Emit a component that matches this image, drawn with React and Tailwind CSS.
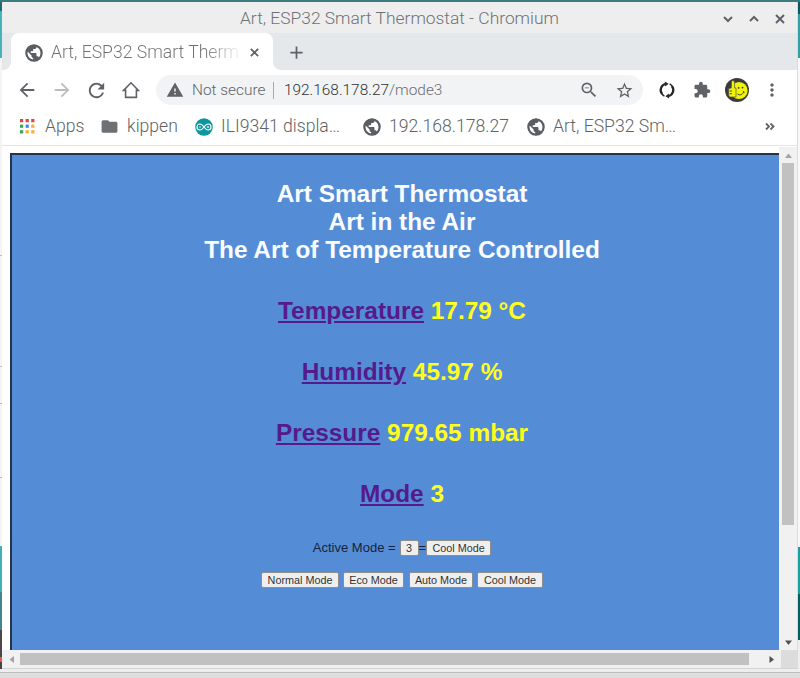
import React from "react";
import { MdArrowBack, MdArrowForward, MdRefresh, MdWarning, MdStarBorder, MdExtension, MdFolder, MdMoreVert, MdAdd, MdOutlineZoomOut } from "react-icons/md";

const GlobeIcon = () => (
  <svg className="block shrink-0" width="18" height="18" viewBox="1 1 22 22">
    <path fill="#5a5e63" d="M12 2C6.48 2 2 6.48 2 12s4.48 10 10 10 10-4.480 10-10S17.520 2 12 2zm-1 17.930c-3.950-.490-7-3.850-7-7.930 0-.620.080-1.210.210-1.790L9 15v1c0 1.100.900 2 2 2v1.930zm6.900-2.540c-.260-.810-1-1.390-1.900-1.390h-1v-3c0-.550-.450-1-1-1H8v-2h2c.550 0 1-.450 1-1V7h2c1.100 0 2-.900 2-2v-.410c2.930 1.190 5 4.060 5 7.410 0 2.080-.800 3.970-2.100 5.390z" />
    <circle cx="12" cy="12" r="9.6" fill="none" stroke="#5a5e63" strokeWidth="2.2" />
  </svg>
);

const Glyph = ({ d, size = 12 }) => (
  <svg className="block shrink-0" width={size} height={size} viewBox="0 0 12 12" fill="none" stroke="#5f6368" strokeWidth="2"><path d={d} /></svg>
);

const HomeIcon = () => (
  <svg className="block" width="18" height="18" viewBox="0 0 18 18" fill="none" stroke="#5f6368" strokeWidth="1.6">
    <path d="M1.6 9.4 L9 1.8 L16.4 9.4 H14.4 V16.4 H3.6 V9.4 Z" />
  </svg>
);

const AppsIcon = () => (
  <svg className="block" width="15" height="15" viewBox="0 0 15 15">
    {["#ea4335", "#ea4335", "#ea4335", "#34a853", "#4285f4", "#fbaf33", "#34a853", "#fbaf33", "#fbaf33"].map((c, i) => (
      <rect key={i} x={(i % 3) * 5.6} y={Math.floor(i / 3) * 5.6} width="3.2" height="3.2" fill={c} />
    ))}
  </svg>
);

const ArduinoIcon = () => (
  <svg className="block" width="18" height="18" viewBox="0 0 18 18" fill="none" stroke="#fff">
    <circle cx="9" cy="9" r="8.8" fill="#0d979d" stroke="none" />
    <path d="M9 9 C7.4 6.8 6.5 6 5 6 a3 3 0 0 0 0 6 C6.5 12 7.4 11.2 9 9 C10.6 6.8 11.5 6 13 6 a3 3 0 0 1 0 6 C11.5 12 10.6 11.2 9 9 Z" strokeWidth="1.2" />
    <path d="M4 9 h2 M12 9 h2 M13 8 v2" strokeWidth="0.8" />
  </svg>
);

const SyncIcon = () => (
  <svg className="block" width="18" height="18" viewBox="0 0 18 18">
    <g fill="none" stroke="#26282b" strokeWidth="2.3">
      <path d="M7.2 3 A6.3 6.3 0 0 0 4.2 13.1" />
      <path d="M10.8 15 A6.3 6.3 0 0 0 13.8 4.9" />
    </g>
    <path d="M6.8 0.4 L10.6 2.7 L7.2 5.5 Z M11.2 17.6 L7.4 15.3 L10.8 12.5 Z" fill="#26282b" />
    <path d="M11.6 2.9 A6.6 6.6 0 0 1 14 5 M6.4 15.1 A6.6 6.6 0 0 1 4 13" stroke="#26282b" strokeWidth="1.5" fill="none" />
  </svg>
);

const AvatarIcon = () => (
  <svg className="block" width="24" height="24" viewBox="0 0 24 24">
    <circle cx="12" cy="12" r="12" fill="#3b3c40" />
    <circle cx="14" cy="12.5" r="8.6" fill="#f2f20a" />
    <path d="M3.6 10.5 L6.4 10 V4.2 Q6.4 2.4 8 2.5 Q9.6 2.7 9.6 4.6 V10 H11 V19 H5.2 Q3.6 19 3.6 16 Z" fill="#f2f20a" stroke="#3b3c40" strokeWidth=".6" />
    <path d="M4.6 13 H7 M4.6 15.7 H7 M12.4 16 Q16 18.6 18.8 14 M17.8 13.3 L19.6 14.3" fill="none" stroke="#3b3c40" strokeWidth=".9" />
    <circle cx="13.6" cy="9.8" r=".9" fill="#3b3c40" />
    <circle cx="17.5" cy="9.6" r=".9" fill="#3b3c40" />
  </svg>
);

const Arrow = ({ d, color }) => (
  <svg className="block" width="9" height="9" viewBox="0 0 9 9"><path d={d} fill={color} /></svg>
);

function TitleBar() {
  return (
    <div className="flex h-[31px] items-center bg-[#eeeeee] pt-[2px] pl-[238px]">
      <span className="w-[474px] text-[17.4px] font-light whitespace-nowrap text-[#6f7174]">Art, ESP32 Smart Thermostat - Chromium</span>
      <span className="flex w-7 justify-center"><Glyph d="M2 4 L6 8 L10 4" /></span>
      <span className="flex w-6 justify-center"><Glyph d="M2 8 L6 4 L10 8" /></span>
      <span className="flex w-7 justify-center"><Glyph d="M2 2 L10 10 M10 2 L2 10" /></span>
    </div>
  );
}

function TabStrip() {
  return (
    <div className="flex h-[37px] bg-white">
      <div className="w-[9px] rounded-br-lg bg-[#e4e8eb]" />
      <div className="bg-[#e4e8eb]">
        <div className="flex h-full w-[262px] items-center rounded-t-lg bg-white pt-[2px] pl-[14px]">
          <GlobeIcon />
          <span className="ml-2 w-[192px] bg-gradient-to-r from-[#6f7174] from-80% to-transparent bg-clip-text text-[17.6px] font-light whitespace-nowrap text-transparent">Art, ESP32 Smart Therm</span>
          <span className="ml-[6px]"><Glyph d="M2 2 L10 10 M10 2 L2 10" size={11} /></span>
        </div>
      </div>
      <div className="flex flex-1 items-center rounded-bl-lg bg-[#e4e8eb] pt-px pl-[13px] text-[#5f6368]">
        <MdAdd size={21} />
      </div>
    </div>
  );
}

function Toolbar() {
  return (
    <div className="flex h-[40px] items-center bg-white pl-[14px] text-[#5f6368]">
      <MdArrowBack size={22} />
      <MdArrowForward size={22} className="ml-[13px] text-[#babcbe]" />
      <MdRefresh size={23} className="ml-[12px]" />
      <div className="ml-[14px]"><HomeIcon /></div>
      <div className="ml-[16px] flex h-[30px] w-[487px] items-center rounded-full bg-[#f1f3f4] pl-[10px]">
        <MdWarning size={18} />
        <span className="ml-[8px] w-[74px] pt-px text-[15.4px] font-light whitespace-nowrap">Not secure</span>
        <span className="ml-[7px] h-[17px] w-px bg-[#a7aaad]" />
        <span className="ml-[10px] w-[293px] pt-px text-[15.4px] font-light whitespace-nowrap text-[#303236]">192.168.178.27<span className="text-[#6b6e72]">/mode3</span></span>
        <MdOutlineZoomOut size={20} className="ml-[2px]" />
        <MdStarBorder size={19} className="ml-[16px]" />
      </div>
      <div className="ml-[15px]"><SyncIcon /></div>
      <MdExtension size={18} className="ml-[17px]" />
      <div className="ml-[14px]"><AvatarIcon /></div>
      <MdMoreVert size={20} className="ml-[13px]" />
    </div>
  );
}

function Bookmarks() {
  return (
    <div className="flex h-[36px] items-center border-b border-[#e3e5e7] bg-white pb-[2px] pl-[18px] text-[17.6px] font-light whitespace-nowrap text-[#606367]">
      <AppsIcon />
      <span className="ml-[10px] w-[55px]">Apps</span>
      <MdFolder size={19} className="text-[#6e7174]" />
      <span className="ml-[8px] w-[68px]">kippen</span>
      <ArduinoIcon />
      <span className="ml-[8px] w-[142px]">ILI9341 displa…</span>
      <GlobeIcon />
      <span className="ml-[8px] w-[138px]">192.168.178.27</span>
      <GlobeIcon />
      <span className="ml-[8px] w-[212px]">Art, ESP32 Sm…</span>
      <svg className="block" width="10" height="9" viewBox="0 0 10 9" fill="none" stroke="#5f6368" strokeWidth="1.8"><path d="M1 1.5 L4 4.5 L1 7.5 M5.5 1.5 L8.5 4.5 L5.5 7.5" /></svg>
    </div>
  );
}

const Reading = ({ label, value }) => (
  <p className="mb-[33px] h-[28px] text-[24.4px] leading-[28px] font-bold text-[#ffff1e]">
    <span className="text-[#551a8b] underline">{label}</span> {value}
  </p>
);

const ModeButton = ({ children, size }) => (
  <button className={"flex h-[16px] items-center justify-center rounded-[2px] border border-[#8d8d8d] bg-[#efefef] text-[10.8px] leading-none whitespace-nowrap text-[#333] " + size}>{children}</button>
);

function Page() {
  return (
    <div className="flex h-[503px] bg-white pl-[8px]">
      <div className="mt-[6px] w-[769px] border-t-2 border-l-2 border-[#24344c] bg-[#548dd6] text-center font-['Liberation_Sans',Arial,sans-serif]">
        <div className="pt-[25px] pr-0 pl-[13px]">
          <h1 className="mb-[33px] text-[24.4px] leading-[28px] font-bold text-[#fafcff]">
            Art Smart Thermostat<br />Art in the Air<br />The Art of Temperature Controlled
          </h1>
          <Reading label="Temperature" value="17.79 °C" />
          <Reading label="Humidity" value="45.97 %" />
          <Reading label="Pressure" value="979.65 mbar" />
          <Reading label="Mode" value="3" />
          <div className="-mt-px flex h-[16px] items-center justify-center text-[13px] leading-none text-[#14243c]">
            <span className="mr-[4px] mb-[2px] whitespace-nowrap">Active Mode =</span>
            <ModeButton size="w-[19px]">3</ModeButton>
            <span className="mb-px">=</span>
            <ModeButton size="w-[65px]">Cool Mode</ModeButton>
          </div>
          <div className="mt-[16px] flex justify-center">
            <ModeButton size="w-[78px]">Normal Mode</ModeButton>
            <ModeButton size="w-[61px] ml-[4px]">Eco Mode</ModeButton>
            <ModeButton size="w-[64px] ml-[5px]">Auto Mode</ModeButton>
            <ModeButton size="w-[66px] ml-[4px]">Cool Mode</ModeButton>
          </div>
        </div>
      </div>
      <div className="flex w-[18px] flex-col items-center bg-[#f1f1f1] pt-[4px]">
        <Arrow d="M1 7 L4.5 2.5 L8 7 Z" color="#a3a3a3" />
        <div className="mt-[3px] h-[362px] w-[12px] bg-[#c1c1c1]" />
        <div className="mt-[113px]"><Arrow d="M1 2.5 L8 2.5 L4.5 7 Z" color="#505050" /></div>
      </div>
    </div>
  );
}

function HorizontalScrollbar() {
  return (
    <div className="flex h-[18px] items-center bg-[#f1f1f1] pl-[5px]">
      <Arrow d="M7 1 L7 8 L2.5 4.5 Z" color="#a3a3a3" />
      <div className="ml-[4px] h-[12px] w-[729px] bg-[#c1c1c1]" />
      <div className="ml-[18px]"><Arrow d="M2.5 1 L7 4.5 L2.5 8 Z" color="#505050" /></div>
      <div className="ml-auto h-full w-[16px] bg-[#dcdcdc]" />
    </div>
  );
}

export default function App() {
  return (
    <div className="flex h-[678px] w-[800px] flex-col overflow-hidden bg-[#dedede] font-[Roboto,sans-serif]">
      <div className="h-[2px] bg-[#3c7c7c]" />
      <div className="flex h-[667px]">
        <div className="flex w-[2px] flex-col">
          <div className="h-[9px] bg-[#176d70]" />
          <div className="h-[47px] bg-[#45b4ba]" />
          <div className="h-[197px] bg-[#f4f4f4]" />
          <div className="h-px bg-[#e4b3a9]" />
          <div className="h-[110px] bg-[#f4f4f4]" />
          <div className="h-px bg-[#c4c4c4]" />
          <div className="h-[36px] bg-[#f4f4f4]" />
          <div className="h-px bg-[#b4b4b4]" />
          <div className="h-[73px] bg-[#f4f4f4]" />
          <div className="h-px bg-[#b4b4b4]" />
          <div className="h-[68px] bg-[#f4f4f4]" />
          <div className="h-[46px] bg-[#42b1b5]" />
          <div className="h-[38px] bg-[#42858a]" />
          <div className="h-[27px] bg-[#4c4849]" />
          <div className="h-[5px] bg-[#ec563b]" />
          <div className="flex-1 bg-[#454545]" />
        </div>
        <div className="flex w-[795px] flex-col overflow-hidden rounded-t-[4px] border-b border-[#d4d4d4] bg-white">
          <TitleBar />
          <TabStrip />
          <Toolbar />
          <Bookmarks />
          <div className="h-px shrink-0" />
          <Page />
          <HorizontalScrollbar />
        </div>
        <div className="flex w-[3px] flex-col border-l border-[#dcdcdc]">
          <div className="h-[12px] bg-[#0b595e]" />
          <div className="h-[44px] bg-[#32a0a5]" />
          <div className="h-[489px] bg-[#f8f8f8]" />
          <div className="h-[47px] bg-[#17a1a2]" />
          <div className="h-[46px] bg-[#075e60]" />
          <div className="flex-1 bg-[#eeeeee]" />
        </div>
      </div>
      <div className="h-[4px] border-b border-[#bcbcbc] bg-[#eeeeee]" />
    </div>
  );
}
